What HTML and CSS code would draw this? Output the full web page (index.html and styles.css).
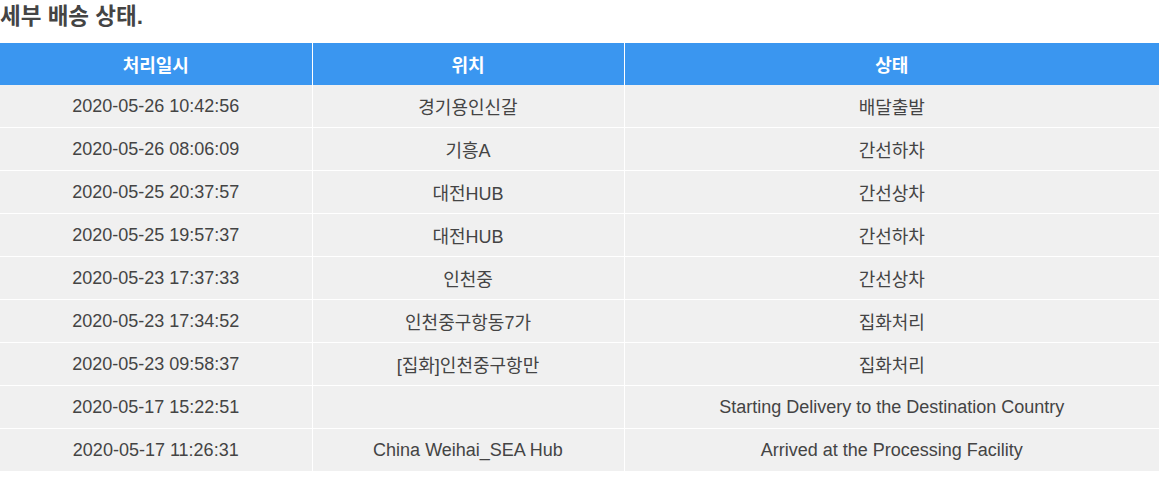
FILE: index.html
```html
<!DOCTYPE html>
<html lang="ko">
<head>
<meta charset="utf-8">
<title>세부 배송 상태</title>
<link rel="stylesheet" href="styles.css">
</head>
<body>
<div class="page">
  <h3 class="title">세부 배송 상태.</h3>
  <table class="track">
    <colgroup>
      <col class="c-date">
      <col class="c-loc">
      <col class="c-status">
    </colgroup>
    <thead>
      <tr><th>처리일시</th><th>위치</th><th>상태</th></tr>
    </thead>
    <tbody>
      <tr><td>2020-05-26 10:42:56</td><td>경기용인신갈</td><td>배달출발</td></tr>
      <tr><td>2020-05-26 08:06:09</td><td>기흥A</td><td>간선하차</td></tr>
      <tr><td>2020-05-25 20:37:57</td><td>대전HUB</td><td>간선상차</td></tr>
      <tr><td>2020-05-25 19:57:37</td><td>대전HUB</td><td>간선하차</td></tr>
      <tr><td>2020-05-23 17:37:33</td><td>인천중</td><td>간선상차</td></tr>
      <tr><td>2020-05-23 17:34:52</td><td>인천중구항동7가</td><td>집화처리</td></tr>
      <tr><td>2020-05-23 09:58:37</td><td>[집화]인천중구항만</td><td>집화처리</td></tr>
      <tr><td>2020-05-17 15:22:51</td><td></td><td>Starting Delivery to the Destination Country</td></tr>
      <tr><td>2020-05-17 11:26:31</td><td>China Weihai_SEA Hub</td><td>Arrived at the Processing Facility</td></tr>
    </tbody>
  </table>
</div>
</body>
</html>
```
FILE: styles.css
```css
html, body {
  margin: 0;
  padding: 0;
  background: #fff;
}
body {
  font-family: "Liberation Sans", Arial, "Noto Sans CJK KR", sans-serif;
  color: #444;
}
.page {
  width: 1159px;
}
.title {
  margin: 0;
  padding-top: 3px;
  height: 43px;
  box-sizing: border-box;
  font-size: 22.5px;
  font-weight: bold;
  line-height: 28px;
  color: #444;
}
.track {
  width: 1159px;
  border-collapse: collapse;
  table-layout: fixed;
}
.c-date { width: 312px; }
.c-loc { width: 312px; }
.track th,
.track td {
  text-align: center;
  vertical-align: middle;
  border: 1px solid #fff;
  padding: 0;
  font-size: 18px;
}
.track th {
  height: 42px;
  background: #3a96f0;
  color: #fff;
  font-weight: bold;
  border-top: 0;
  border-bottom: 0;
}
.track td {
  height: 42px;
  background: #f0f0f0;
  color: #444;
  border-top: 0;
}
.track tbody tr:last-child td { border-bottom: 0; }
.track tr > :first-child { border-left: 0; }
.track tr > :last-child { border-right: 0; }
```
